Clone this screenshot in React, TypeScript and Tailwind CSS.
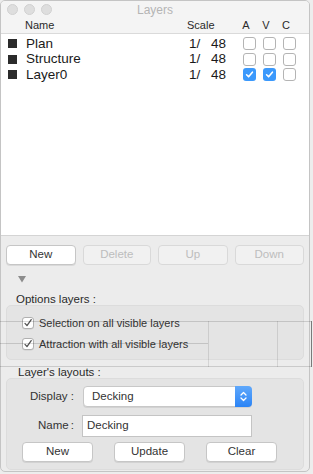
import React from "react";

const font = { fontFamily: '"Liberation Sans", Arial, sans-serif' };

function Box({ checked }: { checked?: boolean }) {
  if (checked) {
    return (
      <div className="w-[13px] h-[13px] rounded-[3px] bg-[#3b99fc] flex items-center justify-center">
        <svg width="9" height="9" viewBox="0 0 9 9">
          <path d="M1.6 4.8 L3.6 6.8 L7.4 2.2" stroke="white" strokeWidth="1.6" fill="none" strokeLinecap="round" strokeLinejoin="round" />
        </svg>
      </div>
    );
  }
  return <div className="w-[13px] h-[13px] rounded-[3px] bg-white border border-[#b4b4b4]" />;
}

function GrayCheck() {
  return (
    <div className="w-[12px] h-[12px] rounded-[3px] bg-white border border-[#b0b0b0] flex items-center justify-center shadow-[0_0.5px_0.5px_rgba(0,0,0,0.1)]">
      <svg width="10" height="10" viewBox="0 0 10 10">
        <path d="M2 5.4 L4 7.6 L8.2 1.6" stroke="#555" strokeWidth="1.3" fill="none" strokeLinecap="round" strokeLinejoin="round" />
      </svg>
    </div>
  );
}

function Row({ name, a, v }: { name: string; a?: boolean; v?: boolean }) {
  return (
    <div className="h-[15.5px] flex items-center text-[13.5px] text-[#1a1a1a]">
      <div className="w-[9px] h-[9px] bg-[#2b2b2b] ml-[7px]" />
      <div className="ml-[9px] w-[163px]">{name}</div>
      <div className="w-[22px]">1/</div>
      <div className="w-[32px]">48</div>
      <div className="flex gap-[7px]">
        <Box checked={a} />
        <Box checked={v} />
        <Box />
      </div>
    </div>
  );
}

function Btn({ label, disabled, w }: { label: string; disabled?: boolean; w: string }) {
  return (
    <div
      className={
        "h-[20px] rounded-[4px] flex items-center justify-center text-[11.5px] " +
        w +
        (disabled
          ? " bg-[#f1f1f1] border border-[#d9d9d9] text-[#bdbdbd]"
          : " bg-white border border-[#c6c6c6] text-[#333] shadow-[0_1px_0.5px_rgba(0,0,0,0.08)]")
      }
    >
      {label}
    </div>
  );
}

export default function App() {
  return (
    <div className="relative w-[313px] h-[474px] bg-[#ededed] overflow-hidden" style={font}>
      <div className="w-[310px] h-[472px] border border-[#c4c4c4] rounded-[5px] bg-[#ececec] flex flex-col overflow-hidden">
        {/* title bar */}
        <div className="h-[16px] bg-[#f4f4f4] flex items-center relative shrink-0">
          <div className="flex gap-[6px] ml-[6px]">
            <div className="w-[11px] h-[11px] rounded-full bg-[#dedede] border border-[#d0d0d0]" />
            <div className="w-[11px] h-[11px] rounded-full bg-[#dedede] border border-[#d0d0d0]" />
            <div className="w-[11px] h-[11px] rounded-full bg-[#dedede] border border-[#d0d0d0]" />
          </div>
          <div className="absolute inset-0 flex items-center justify-center text-[12px] text-[#b4b4b4] pt-[2px]">Layers</div>
        </div>
        {/* header */}
        <div className="h-[17px] bg-[#f4f4f4] border-b border-[#dadada] flex items-center text-[11px] text-[#2a2a2a] shrink-0">
          <div className="ml-[24px] w-[162px]">Name</div>
          <div className="w-[49px]">Scale</div>
          <div className="w-[20px] text-center">A</div>
          <div className="w-[20px] text-center">V</div>
          <div className="w-[20px] text-center">C</div>
        </div>
        {/* list */}
        <div className="h-[202px] bg-white border-b border-[#d4d4d4] pt-[2px] shrink-0">
          <Row name="Plan" />
          <Row name="Structure" />
          <Row name="Layer0" a v />
        </div>
        {/* buttons */}
        <div className="flex gap-[7px] px-[5px] mt-[9px]">
          <Btn label="New" w="w-[70px]" />
          <Btn label="Delete" disabled w="w-[69px]" />
          <Btn label="Up" disabled w="w-[70px]" />
          <Btn label="Down" disabled w="w-[70px]" />
        </div>
        <div className="ml-[17px] mt-[11px] h-[7px] flex">
          <svg width="8" height="7" viewBox="0 0 8 7">
            <path d="M0 0 L8 0 L4 6.5 Z" fill="#8c8c8c" />
          </svg>
        </div>
        <div className="ml-[15px] mt-[10px] text-[11.5px] text-[#2a2a2a] leading-[12px]">Options layers :</div>
        <div className="mx-[5px] mt-[0px] h-[55px] rounded-[5px] bg-[#e4e4e4] border border-[#dcdcdc] flex flex-col gap-[9px] pt-[11px] pl-[15px] text-[11px] leading-[12px] text-[#333]">
          <div className="flex items-center gap-[5px]">
            <GrayCheck />
            <span>Selection on all visible layers</span>
          </div>
          <div className="flex items-center gap-[5px]">
            <GrayCheck />
            <span>Attraction with all visible layers</span>
          </div>
        </div>
        <div className="ml-[17px] mt-[6px] text-[11.5px] text-[#2a2a2a] leading-[12px]">Layer's layouts :</div>
        <div className="mx-[5px] mt-[0px] h-[92px] rounded-[5px] bg-[#e4e4e4] border border-[#dcdcdc] flex flex-col text-[11.5px] text-[#333]">
          <div className="flex items-center mt-[7px]">
            <div className="w-[67px] text-right pr-[0px]">Display :</div>
            <div className="ml-[9px] w-[169px] h-[21px] rounded-[4px] bg-white border border-[#c8c8c8] flex items-center shadow-[0_1px_0.5px_rgba(0,0,0,0.08)]">
              <div className="flex-1 pl-[8px]">Decking</div>
              <div className="w-[17px] h-[21px] -mr-[1px] rounded-r-[4px] bg-gradient-to-b from-[#5fa8fb] to-[#2a84f6] flex items-center justify-center">
                <svg width="9" height="13" viewBox="0 0 9 13">
                  <path d="M2 5 L4.5 2.5 L7 5 M2 8 L4.5 10.5 L7 8" stroke="white" strokeWidth="1.3" fill="none" strokeLinecap="round" strokeLinejoin="round" />
                </svg>
              </div>
            </div>
          </div>
          <div className="flex items-center mt-[8px]">
            <div className="w-[67px] flex pl-[31px]">
              <span>Name</span>
              <span className="ml-auto">:</span>
            </div>
            <div className="ml-[8px] w-[170px] h-[22px] bg-white border border-[#c4c4c4] flex items-center pl-[4px]">Decking</div>
          </div>
          <div className="flex mt-[5px] ml-[15px] gap-[21px]">
            <Btn label="New" w="w-[71px]" />
            <Btn label="Update" w="w-[71px]" />
            <Btn label="Clear" w="w-[71px]" />
          </div>
        </div>
      </div>
      {/* ghost overlay lines from window behind */}
      <div className="absolute left-0 top-[321px] w-[311px] h-[1px] bg-[rgba(0,0,0,0.14)] pointer-events-none" />
      <div className="absolute left-0 top-[343px] w-[208px] h-[1px] bg-[rgba(0,0,0,0.14)] pointer-events-none" />
      <div className="absolute left-0 top-[366px] w-[311px] h-[1px] bg-[rgba(0,0,0,0.14)] pointer-events-none" />
      <div className="absolute left-[208px] top-[321px] w-[1px] h-[46px] bg-[rgba(0,0,0,0.1)] pointer-events-none" />
      <div className="absolute left-[277px] top-[321px] w-[1px] h-[46px] bg-[rgba(0,0,0,0.1)] pointer-events-none" />
      <div className="absolute left-[311px] top-[321px] w-[1px] h-[46px] bg-[#7a7a7a] pointer-events-none" />
    </div>
  );
}
